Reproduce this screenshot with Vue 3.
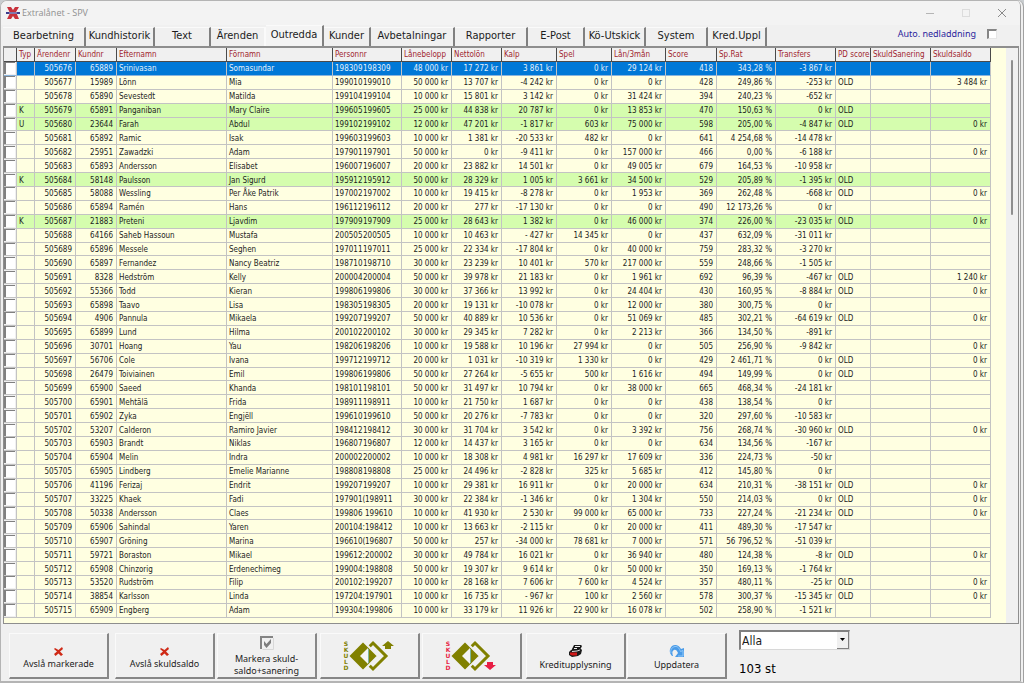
<script setup>
import { ref } from 'vue'

const tabs = [
  { label: 'Bearbetning', width: 83 },
  { label: 'Kundhistorik', width: 69 },
  { label: 'Text', width: 56 },
  { label: 'Ärenden', width: 55 },
  { label: 'Outredda', width: 58 },
  { label: 'Kunder', width: 47 },
  { label: 'Avbetalningar', width: 84 },
  { label: 'Rapporter', width: 73 },
  { label: 'E-Post', width: 57 },
  { label: 'Kö-Utskick', width: 61 },
  { label: 'System', width: 62 },
  { label: 'Kred.Uppl', width: 59 },
]
const active = ref('Outredda')

const columns = [
  { key: 'type', label: 'Typ', width: 18 },
  { key: 'caseNo', label: 'Ärendenr', width: 41, num: true },
  { key: 'customer', label: 'Kundnr', width: 41, num: true },
  { key: 'last', label: 'Efternamn', width: 110 },
  { key: 'first', label: 'Förnamn', width: 106 },
  { key: 'pnr', label: 'Personnr', width: 69 },
  { key: 'amount', label: 'Lånebelopp', width: 50, num: true },
  { key: 'net', label: 'Nettolön', width: 50, num: true },
  { key: 'kalp', label: 'Kalp', width: 55, num: true },
  { key: 'games', label: 'Spel', width: 55, num: true },
  { key: 'loans', label: 'Lån/3mån', width: 54, num: true },
  { key: 'score', label: 'Score', width: 51, num: true },
  { key: 'rate', label: 'Sp.Rat', width: 59, num: true },
  { key: 'transfers', label: 'Transfers', width: 60, num: true },
  { key: 'pd', label: 'PD score', width: 35 },
  { key: 'sanering', label: 'SkuldSanering', width: 60 },
  { key: 'debt', label: 'Skuldsaldo', width: 60, num: true },
]

// type | customer | last | first | personal no. | amount | net | kalp | games | loans | score | rate | transfers | pd | debt
const source = `
|65889|Srinivasan|Somasundar|198309 198309|48 000|17 272|3 861|0|29 124|418|343,28|-3 867||
|15989|Lönn|Mia|199010 199010|50 000|13 707|-4 242|0|0|428|249,86|-253|OLD|3 484
|65890|Sevestedt|Matilda|199104 199104|10 000|15 801|3 142|0|31 424|394|240,23|-652||
K|65891|Panganiban|Mary Claire|199605 199605|25 000|44 838|20 787|0|13 853|470|150,63|0|OLD|
U|23644|Farah|Abdul|199102 199102|12 000|47 201|-1 817|603|75 000|598|205,00|-4 847|OLD|0
|65892|Ramic|Isak|199603 199603|10 000|1 381|-20 533|482|0|641|4 254,68|-14 478||
|25951|Zawadzki|Adam|197901 197901|50 000|0|-9 411|0|157 000|466|0,00|-6 188||0
|65893|Andersson|Elisabet|196007 196007|20 000|23 882|14 501|0|49 005|679|164,53|-10 958||
K|58148|Paulsson|Jan Sigurd|195912 195912|50 000|28 329|1 005|3 661|34 500|529|205,89|-1 395|OLD|
|58088|Wessling|Per Åke Patrik|197002 197002|10 000|19 415|-8 278|0|1 953|369|262,48|-668|OLD|0
|65894|Ramén|Hans|196112 196112|20 000|277|-17 130|0|0|490|12 173,26|0||
K|21883|Preteni|Ljavdim|197909 197909|25 000|28 643|1 382|0|46 000|374|226,00|-23 035|OLD|0
|64166|Saheb Hassoun|Mustafa|200505 200505|10 000|10 463|- 427|14 345|0|437|632,09|-31 011||
|65896|Messele|Seghen|197011 197011|25 000|22 334|-17 804|0|40 000|759|283,32|-3 270||
|65897|Fernandez|Nancy Beatriz|198710 198710|30 000|23 239|10 401|570|217 000|559|248,66|-1 505||
|8328|Hedström|Kelly|200004 200004|50 000|39 978|21 183|0|1 961|692|96,39|-467|OLD|1 240
|55366|Todd|Kieran|199806 199806|30 000|37 366|13 992|0|24 404|430|160,95|-8 884|OLD|0
|65898|Taavo|Lisa|198305 198305|20 000|19 131|-10 078|0|12 000|380|300,75|0||
|4906|Pannula|Mikaela|199207 199207|50 000|40 889|10 536|0|51 069|485|302,21|-64 619|OLD|0
|65899|Lund|Hilma|200102 200102|30 000|29 345|7 282|0|2 213|366|134,50|-891||
|30701|Hoang|Yau|198206 198206|10 000|19 588|10 196|27 994|0|505|256,90|-9 842||0
|56706|Cole|Ivana|199712 199712|20 000|1 031|-10 319|1 330|0|429|2 461,71|0|OLD|0
|26479|Toiviainen|Emil|199806 199806|50 000|27 264|-5 655|500|1 616|494|149,99|0|OLD|0
|65900|Saeed|Khanda|198101 198101|50 000|31 497|10 794|0|38 000|665|468,34|-24 181||
|65901|Mehtälä|Frida|198911 198911|10 000|21 750|1 687|0|0|438|138,54|0||
|65902|Zyka|Engjëll|199610 199610|50 000|20 276|-7 783|0|0|320|297,60|-10 583||
|53207|Calderon|Ramiro Javier|198412 198412|30 000|31 704|3 542|0|3 392|756|268,74|-30 960|OLD|0
|65903|Brandt|Niklas|196807 196807|12 000|14 437|3 165|0|0|634|134,56|-167||
|65904|Melin|Indra|200002 200002|10 000|18 308|4 981|16 297|17 609|336|224,73|-50||
|65905|Lindberg|Emelie Marianne|198808 198808|25 000|24 496|-2 828|325|5 685|412|145,80|0||
|41196|Ferizaj|Endrit|199207 199207|10 000|29 381|16 911|0|20 000|634|210,31|-38 151|OLD|0
|33225|Khaek|Fadi|197901( 198911|30 000|22 384|-1 346|0|1 304|550|214,03|0|OLD|0
|50338|Andersson|Claes|199806  199610|10 000|41 930|2 530|99 000|65 000|733|227,24|-21 234|OLD|0
|65906|Sahindal|Yaren|200104: 198412|10 000|13 663|-2 115|0|20 000|411|489,30|-17 547||
|65907|Gröning|Marina|196610( 196807|50 000|257|-34 000|78 681|7 000|571|56 796,52|-51 039||
|59721|Boraston|Mikael|199612: 200002|30 000|49 784|16 021|0|36 940|480|124,38|-8|OLD|0
|65908|Chinzorig|Erdenechimeg|199004: 198808|50 000|19 307|9 614|0|50 000|350|169,13|-1 764||
|53520|Rudström|Filip|200102: 199207|10 000|28 168|7 606|7 600|4 524|357|480,11|-25|OLD|0
|38854|Karlsson|Linda|197204: 197901|10 000|16 735|- 967|100|2 560|578|300,37|-15 345|OLD|0
|65909|Engberg|Adam|199304: 199806|10 000|33 179|11 926|22 900|16 078|502|258,90|-1 521||`

const kr = (v) => (v === '' ? '' : v + ' kr')
const rows = ref(
  source.trim().split('\n').map((line, i) => {
    const [type, customer, last, first, pnr, amount, net, kalp, games, loans, score, rate, transfers, pd, debt] = line.split('|')
    return {
      type, caseNo: String(505676 + i), customer, last, first, pnr: pnr.split(/ +/), wide: i > 30,
      amount: kr(amount), net: kr(net), kalp: kr(kalp), games: kr(games), loans: kr(loans),
      score, rate: rate + ' %', transfers: kr(transfers), pd, sanering: '', debt: kr(debt),
      checked: false, selected: i === 0,
    }
  }),
)
function select(row) {
  rows.value.forEach((r) => (r.selected = r === row))
}
const auto = ref(false)
const filter = ref('Alla')
const letters = 'SKULD'.split('')
</script>

<template>
  <div class="window">
    <header class="titlebar">
      <svg class="logo" width="14" height="12" viewBox="0 0 14 12" aria-hidden="true">
        <path d="M1 0H5L7 3L9 0H13L10 5L13 12H9L7 9L5 12H1L4 6Z" fill="#c8323c" />
        <path d="M0 5H14V7H0Z" fill="#3c3c8c" />
        <path d="M3 6H11" stroke="#c9b4cc" />
      </svg>
      <h1>Extralånet - SPV</h1>
      <div class="winbuttons">
        <button type="button" aria-label="Minimera"><svg width="10" height="10"><path d="M1 5.5H9" stroke="#b5b5b5" /></svg></button>
        <button type="button" aria-label="Maximera"><svg width="10" height="10"><rect x="1.500" y="1.500" width="7" height="7" fill="none" stroke="#dcdcdc" /></svg></button>
        <button type="button" aria-label="Stäng"><svg width="10" height="10"><path d="M1 1L9 9M9 1L1 9" stroke="#8a8a8a" fill="none" /></svg></button>
      </div>
    </header>

    <div class="tabbar">
      <nav class="tabs" role="tablist">
        <button
          v-for="t in tabs" :key="t.label" type="button" role="tab" class="tab"
          :class="{ active: active === t.label, before: t.label === 'Ärenden' }"
          :aria-selected="active === t.label" :style="{ width: t.width + 'px' }"
          @click="active = t.label"
        >{{ t.label }}</button>
      </nav>
      <label class="auto">Auto. nedladdning <input v-model="auto" type="checkbox" class="box" /></label>
    </div>

    <main class="grid">
      <div class="sheet">
        <table>
          <colgroup>
            <col class="c-check" />
            <col v-for="c in columns" :key="c.key" :style="{ width: c.width + 'px' }" />
          </colgroup>
          <thead>
            <tr>
              <th></th>
              <th v-for="c in columns" :key="c.key">{{ c.label }}</th>
            </tr>
          </thead>
          <tbody>
            <tr
              v-for="r in rows" :key="r.caseNo"
              :class="{ selected: r.selected, marked: r.type }" @click="select(r)"
            >
              <td class="check"><input v-model="r.checked" type="checkbox" :aria-label="'Markera ' + r.caseNo" /></td>
              <td v-for="c in columns" :key="c.key" :class="{ num: c.num }">
                <span v-if="c.key === 'pnr'" class="pnr" :class="{ wide: r.wide }"><span>{{ r.pnr[0] }}</span><span>{{ r.pnr[1] }}</span></span>
                <template v-else>{{ r[c.key] }}</template>
              </td>
            </tr>
          </tbody>
        </table>
      </div>
      <div class="scroll"><div class="thumb"></div></div>
    </main>

    <footer class="actions">
      <div class="buttons">
        <button type="button" class="action">
          <svg width="9" height="9" viewBox="0 0 9 9"><path d="M1 1L4.500 3L8 0L9 2L6 4.500L9 7.500L7 9L4.500 6.500L1.500 9L0 7L3 4.500L0 2Z" fill="#cf2a17" /></svg>
          <span>Avslå markerade</span>
        </button>
        <button type="button" class="action">
          <svg width="9" height="9" viewBox="0 0 9 9"><path d="M1 1L4.500 3L8 0L9 2L6 4.500L9 7.500L7 9L4.500 6.500L1.500 9L0 7L3 4.500L0 2Z" fill="#cf2a17" /></svg>
          <span>Avslå skuldsaldo</span>
        </button>
        <button type="button" class="action tight">
          <svg width="14" height="14" viewBox="0 0 14 14">
            <path d="M1 13V1H13" fill="none" stroke="#848484" stroke-width="2" />
            <path d="M2.500 13.500H13.500V2" fill="none" stroke="#d8d8d8" />
            <path d="M4 5L6.500 8L11 3V7L6.500 12L4 9Z" fill="#7d7d7d" />
          </svg>
          <span>Markera skuld-<br />saldo+sanering</span>
        </button>
        <button type="button" class="action picture" aria-label="Skuld upp">
          <span class="skuld"><span v-for="l in letters" :key="l">{{ l }}</span></span>
          <svg width="46" height="32" viewBox="0 0 46 32">
            <path d="M24 3L37 16L24 29L11 16Z" fill="#f0f0f0" stroke="#808000" stroke-width="3" />
            <path d="M14 1L29 16L14 31L-1 16Z" fill="#808000" stroke="#f0f0f0" stroke-width="2" />
            <path d="M19 8V24L11 16Z" fill="#f4f4f4" />
            <path d="M19.500 9V23" stroke="#7fb59a" />
            <path d="M39 1L45 6H42V9H36V6H33Z" fill="#808000" />
          </svg>
        </button>
        <button type="button" class="action picture" aria-label="Skuld ner">
          <span class="skuld red"><span v-for="l in letters" :key="l">{{ l }}</span></span>
          <svg width="46" height="32" viewBox="0 0 46 32">
            <path d="M24 3L37 16L24 29L11 16Z" fill="#f0f0f0" stroke="#808000" stroke-width="3" />
            <path d="M14 1L29 16L14 31L-1 16Z" fill="#808000" stroke="#f0f0f0" stroke-width="2" />
            <path d="M19 8V24L11 16Z" fill="#f4f4f4" />
            <path d="M19.500 9V23" stroke="#7fb59a" />
            <path d="M39 30L45 25H42V22H36V25H33Z" fill="#e81e44" />
          </svg>
        </button>
        <button type="button" class="action">
          <svg width="14" height="12" viewBox="0 0 14 12">
            <path d="M5 0H12L13 1L11 5L8 7H2L3 4Z" fill="#1a1a1a" />
            <path d="M6 1.500H11M5 3.500H8" stroke="#f0f0f0" />
            <path d="M0 7L2 5L12 4L13 5L12 9L9 11L3 12L0 10Z" fill="#1a1a1a" />
            <path d="M1 7.500H8V10.500H3L1 9.500Z" fill="#d01818" />
            <path d="M3 6.500L8 6L11 5" stroke="#dcdcdc" fill="none" />
          </svg>
          <span>Kreditupplysning</span>
        </button>
        <button type="button" class="action">
          <svg width="16" height="12" viewBox="0 0 16 12">
            <path d="M3 11C0 8 0 4 3 1C6 -1 10 0 12 4L15 3V12H6L9 8C8 5 6 4 5 5C3 6 3 8 4 11Z" fill="#4a9be8" />
            <path d="M2 8C1 5 3 2 6 1.500C9 1 10.500 4 11.500 6.500L14 5.500V11H9" fill="none" stroke="#90c8f8" />
          </svg>
          <span>Uppdatera</span>
        </button>
      </div>
      <div class="filter">
        <div class="combo">
          <select v-model="filter" aria-label="Filter"><option>Alla</option></select>
          <span class="arrow"><svg width="7" height="4" viewBox="0 0 7 4"><path d="M1 0H6L3.500 3Z" fill="#000" /></svg></span>
        </div>
        <output>103 st</output>
      </div>
    </footer>
  </div>
</template>

<style>
body {
  margin: 0;
  background: #c9cdd0;
}
</style>

<style scoped>
.window {
  box-sizing: border-box;
  display: flex;
  flex-direction: column;
  height: 100vh;
  min-height: 640px;
  border: 1px solid #b4b4b4;
  border-right: 4px double #a0a0a0;
  border-bottom: 2px solid #b4b4b4;
  border-radius: 7px 7px 0 0;
  background: #f0f0f0;
  overflow: hidden;
  font-family: "DejaVu Sans Condensed", "DejaVu Sans", sans-serif;
  color: #1c1c1c;
}
button,
select {
  font: inherit;
  color: inherit;
}
.titlebar {
  display: flex;
  align-items: center;
  flex: none;
  height: 24px;
  padding-left: 5px;
  background: #f3f3f3;
}
.titlebar h1 {
  flex: 1;
  margin: 0 0 0 2px;
  font: 400 9px/12px "Open Sans", sans-serif;
  color: #8f8f8f;
}
.winbuttons {
  display: flex;
}
.winbuttons button {
  display: flex;
  align-items: center;
  justify-content: center;
  width: 36px;
  height: 22px;
  padding: 0;
  border: 0;
  background: none;
}
.tabbar {
  display: flex;
  justify-content: space-between;
  flex: none;
  height: 21px;
  padding: 0 23px 0 2px;
}
.tabs {
  display: flex;
  align-items: flex-end;
}
.tab {
  box-sizing: border-box;
  height: 19px;
  padding: 0 0 2px;
  border: 0;
  border-top: 1px solid #fafafa;
  border-right: 2px solid #808080;
  background: #f0f0f0;
  font-size: 11px;
  line-height: 16px;
  white-space: nowrap;
}
.tab.before {
  border-right-color: #fafafa;
}
.tab.active {
  height: 21px;
  padding-bottom: 3px;
  background: #f4f4f4;
}
.auto {
  display: flex;
  align-items: center;
  gap: 11px;
  height: 18px;
  font: 9px/14px "Noto Sans", sans-serif;
  color: #2b1f9c;
}
.box {
  appearance: none;
  box-sizing: border-box;
  width: 10px;
  height: 10px;
  margin: 0;
  border: 1px solid #e6e6e6;
  border-top: 2px solid #858585;
  border-left: 2px solid #858585;
  background: #fff;
}
.box:checked,
.check input:checked {
  background: #444;
}
.grid {
  flex: 1;
  display: flex;
  min-height: 0;
  margin: 0 1px 0 2px;
  border: 1px solid #8e8e8e;
  border-top-width: 2px;
  background: #ffffe1;
}
.sheet {
  flex: 1;
  box-sizing: border-box;
  min-width: 0;
  height: 100%;
  padding: 0 15px 5px 0;
}
.scroll {
  flex: none;
  box-sizing: border-box;
  width: 12px;
  padding: 12px 0 0 5px;
  background: #f0f0f0;
}
.thumb {
  width: 2px;
  height: 155px;
  border-radius: 1px;
  background: #8e8e8e;
}
table {
  width: 100%;
  height: 100%;
  table-layout: fixed;
  border-collapse: separate;
  border-spacing: 0;
  font-size: 8px;
  line-height: 10px;
}
.c-check {
  width: 13px;
}
th,
td {
  padding: 2px 3px 0 2px;
  border-right: 1px solid #c3c3c3;
  border-bottom: 1px solid #c3c3c3;
  text-align: left;
  white-space: nowrap;
  overflow: hidden;
}
th {
  padding: 2px 0 1px 2px;
  border-right-color: #4a4a4a;
  border-bottom-color: #4a4a4a;
  background: #f0f0f0;
  color: #a01f2e;
  font-weight: 400;
}
.num {
  text-align: right;
}
.marked td {
  background: #d5fdae;
}
.selected td {
  background: #0078d7;
  border-bottom-color: #8ab4dc;
  color: #e6f2fc;
}
td.check {
  padding: 0;
  background: #f0f0f0;
}
.check input {
  appearance: none;
  display: block;
  box-sizing: border-box;
  width: 11px;
  height: 12px;
  margin: 0;
  border-top: 1px solid #808080;
  border-left: 2px solid #808080;
  background: #fff;
}
.pnr {
  display: flex;
}
.pnr span:first-child {
  width: 28px;
  overflow: hidden;
}
.pnr.wide span:first-child {
  width: 30px;
}
.actions {
  flex: none;
  display: flex;
  gap: 12px;
  padding: 9px 8px 2px;
}
.buttons {
  display: grid;
  grid-template-columns: 106px 102px 103px 102px 104px 101px 100px;
}
.action {
  box-sizing: border-box;
  display: flex;
  flex-direction: column;
  align-items: center;
  justify-content: center;
  gap: 2px;
  width: 100px;
  height: 46px;
  padding: 5px 0 0;
  border: 1px solid #fafafa;
  border-right: 2px solid #868686;
  border-bottom: 2px solid #868686;
  background: #f0f0f0;
  font: 9px/12px "Noto Sans", sans-serif;
}
.action.tight {
  gap: 3px;
  padding: 2px 0 0;
}
.action.picture {
  flex-direction: row;
  gap: 1px;
  padding: 0;
}
.skuld {
  display: flex;
  flex-direction: column;
  align-items: center;
  font: 700 6px/6px "DejaVu Sans", sans-serif;
  color: #808000;
}
.skuld.red {
  color: #e81e44;
}
.filter {
  display: flex;
  flex-direction: column;
  gap: 11px;
}
.combo {
  box-sizing: border-box;
  display: flex;
  width: 111px;
  height: 20px;
  margin-top: -3px;
  border: 1px solid #d8d8d8;
  border-top: 2px solid #808080;
  border-left: 2px solid #808080;
  background: #fff;
}
.combo select {
  appearance: none;
  flex: 1;
  min-width: 0;
  padding: 0 1px;
  border: 0;
  background: none;
  font-size: 12px;
}
.arrow {
  display: flex;
  align-items: center;
  justify-content: center;
  width: 11px;
  border-right: 1px solid #808080;
  border-bottom: 1px solid #808080;
  background: #f0f0f0;
  pointer-events: none;
}
output {
  font-size: 13px;
  line-height: 16px;
  color: #000;
}
</style>
